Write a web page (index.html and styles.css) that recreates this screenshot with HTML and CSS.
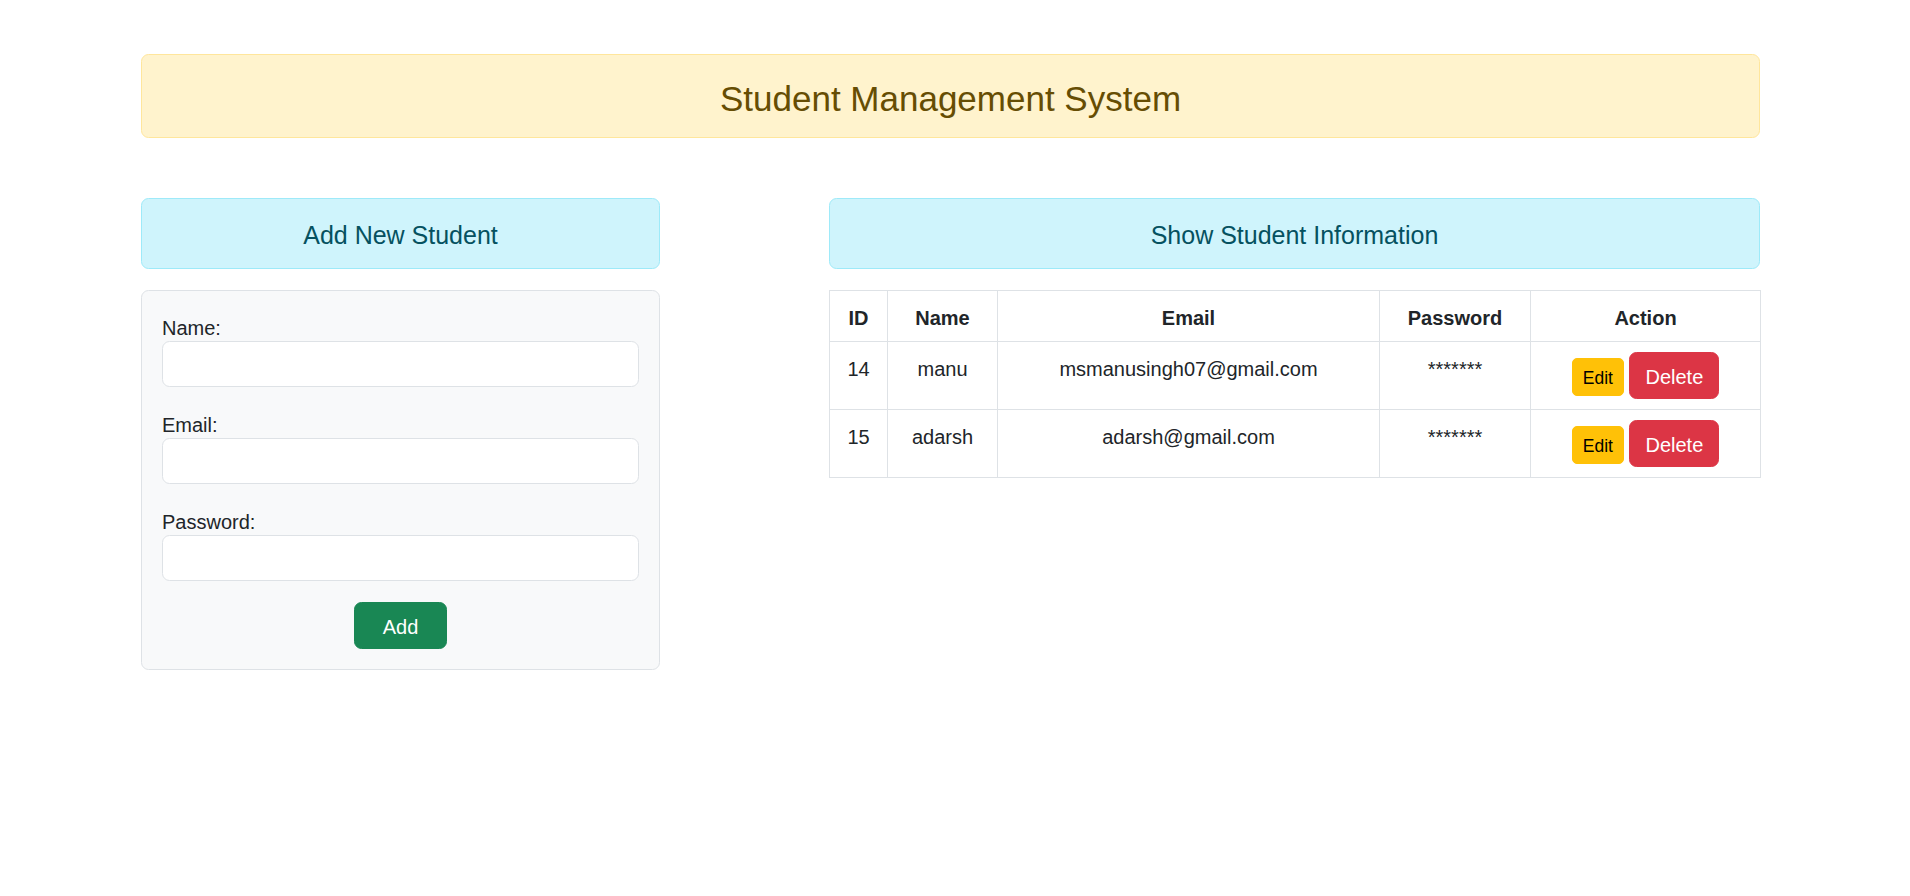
FILE: index.html
```html
<!DOCTYPE html>
<html lang="en">
<head>
<meta charset="utf-8">
<title>Student Management System</title>
<link rel="stylesheet" href="styles.css">
</head>
<body>
<div class="container">
  <div class="alert alert-warning">
    <h3 class="page-title">Student Management System</h3>
  </div>
  <div class="columns">
    <section class="col-left">
      <div class="alert alert-info">
        <h5 class="section-title">Add New Student</h5>
      </div>
      <form class="card">
        <div class="field">
          <label class="label" for="name">Name:</label>
          <input class="input" id="name" type="text">
        </div>
        <div class="field">
          <label class="label" for="email">Email:</label>
          <input class="input" id="email" type="email">
        </div>
        <div class="field">
          <label class="label" for="password">Password:</label>
          <input class="input" id="password" type="password">
        </div>
        <div class="actions">
          <button class="btn btn-success" type="button">Add</button>
        </div>
      </form>
    </section>
    <section class="col-right">
      <div class="alert alert-info">
        <h5 class="section-title">Show Student Information</h5>
      </div>
      <table class="table">
        <colgroup>
          <col class="c-id"><col class="c-name"><col class="c-email"><col class="c-pass"><col class="c-action">
        </colgroup>
        <thead>
          <tr><th>ID</th><th>Name</th><th>Email</th><th>Password</th><th>Action</th></tr>
        </thead>
        <tbody>
          <tr>
            <td class="txt">14</td><td class="txt">manu</td><td class="txt">msmanusingh07@gmail.com</td><td class="txt">*******</td>
            <td class="act"><button class="btn-sm btn-warning" type="button">Edit</button> <button class="btn btn-danger" type="button">Delete</button></td>
          </tr>
          <tr>
            <td class="txt">15</td><td class="txt">adarsh</td><td class="txt">adarsh@gmail.com</td><td class="txt">*******</td>
            <td class="act"><button class="btn-sm btn-warning" type="button">Edit</button> <button class="btn btn-danger" type="button">Delete</button></td>
          </tr>
        </tbody>
      </table>
    </section>
  </div>
</div>
</body>
</html>
```
FILE: styles.css
```css
* { box-sizing: border-box; }
html, body { margin: 0; padding: 0; background: #fff; }
body {
  font-family: "Segoe UI", "Liberation Sans", Arial, sans-serif;
  font-size: 20px;
  line-height: 30px;
  color: #212529;
}
.container {
  width: 1619px;
  margin: 54px 0 0 141px;
}
.alert {
  border: 1px solid transparent;
  border-radius: 7.5px;
  text-align: center;
}
.alert-warning {
  background: #fff3cd;
  border-color: #ffe69c;
  color: #664d03;
  padding: 20px;
}
.alert-info {
  background: #cff4fc;
  border-color: #9eeaf9;
  color: #055160;
  padding: 19px 20px 20px;
  margin-bottom: 21px;
}
.page-title {
  margin: 0;
  font-size: 35px;
  padding-top: 5px;
  line-height: 37px;
  font-weight: 400;
}
.section-title {
  margin: 0;
  font-size: 25px;
  padding-top: 5px;
  line-height: 25px;
  font-weight: 400;
}
.columns {
  display: grid;
  grid-template-columns: 519px 931px;
  column-gap: 169px;
  margin-top: 60px;
  align-items: start;
}
.card {
  background: #f8f9fa;
  border: 1px solid #dee2e6;
  border-radius: 7.5px;
  padding: 20px 20px 20px;
  margin: 0;
}
.field {
  display: flex;
  flex-direction: column;
  margin-bottom: 21px;
}
.label {
  display: block;
  padding-top: 4px;
  line-height: 26px;
}
.input {
  display: block;
  width: 100%;
  height: 46px;
  border: 1px solid #dee2e6;
  border-radius: 7.5px;
  background: #fff;
  padding: 7px 15px;
  font: inherit;
  color: #212529;
  outline: none;
}
.actions { text-align: center; }
.btn, .btn-sm {
  display: inline-block;
  font-family: inherit;
  border: 1px solid transparent;
  cursor: pointer;
  vertical-align: baseline;
  text-align: center;
}
.btn {
  font-size: 20px;
  line-height: 30px;
  padding: 9px 15px 6px;
  border-radius: 7.5px;
}
.btn-sm {
  font-size: 17.5px;
  line-height: 26.25px;
  padding: 6px 10px 4px;
  border-radius: 5px;
}
.btn-success {
  background: #198754;
  border-color: #198754;
  color: #fff;
  width: 93px;
  padding-left: 0;
  padding-right: 0;
}
.btn-warning {
  background: #ffc107;
  border-color: #ffc107;
  color: #000;
}
.btn-danger {
  background: #dc3545;
  border-color: #dc3545;
  color: #fff;
}
.table {
  width: 100%;
  border-collapse: collapse;
  table-layout: fixed;
  background: #fff;
}
.table th, .table td {
  border: 1px solid #dee2e6;
  padding: 10px;
  text-align: center;
  vertical-align: top;
  color: #212529;
  white-space: nowrap;
}
.table th {
  font-weight: 700;
  padding: 12px 10px 8px;
}
.table td.txt { padding: 12px 10px 8px; }
.c-id { width: 58px; }
.c-name { width: 110px; }
.c-email { width: 382px; }
.c-pass { width: 151px; }
.c-action { width: 230px; }
```
